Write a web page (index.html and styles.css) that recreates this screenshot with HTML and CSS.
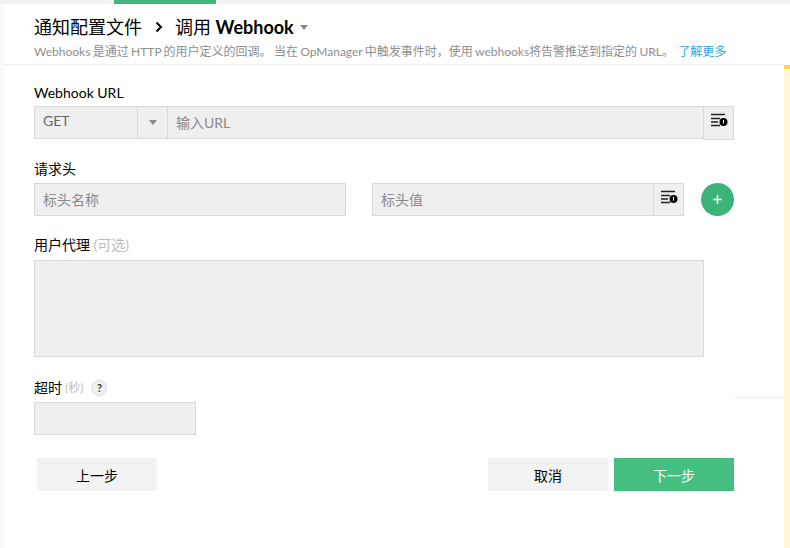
FILE: index.html
```html
<!DOCTYPE html>
<html lang="zh-CN">
<head>
<meta charset="utf-8">
<title>调用 Webhook</title>
<link rel="stylesheet" href="styles.css">
</head>
<body>
<div class="tabbar"><span class="tab-active"></span></div>
<div class="panel">
  <main class="main">
    <header class="head">
      <h1 class="title">
        <span>通知配置文件</span>
        <svg class="chev" width="10" height="12" viewBox="0 0 10 12"><path d="M2.500 1.500 7 6l-4.500 4.500" fill="none" stroke="#000" stroke-width="2"/></svg>
        <span>调用 <b class="title-b">Webhook</b></span>
        <span class="caret caret-title"></span>
      </h1>
      <p class="desc">Webhooks 是通过 HTTP 的用户定义的回调。 当在 OpManager 中触发事件时，使用 webhooks将告警推送到指定的 URL。 <a class="more" href="#">了解更多</a></p>
    </header>
    <div class="form">
      <label class="label l-url">Webhook URL</label>
      <div class="row row-url">
        <div class="field f-method"><span class="method">GET</span></div>
        <div class="field f-arrow"><span class="caret"></span></div>
        <div class="field f-grow ph">输入URL</div>
        <div class="field f-icon f-icon-tall">
          <svg width="18" height="14" viewBox="0 0 18 14"><path d="M1 1.500h14M1 5.500h9M1 9h7M1 12.500h9" stroke="#222" stroke-width="1.300" fill="none"/><circle cx="13.500" cy="9" r="4" fill="#000"/><path d="M13.500 7v3.500" stroke="#fff" stroke-width="1"/></svg>
        </div>
      </div>
      <label class="label l-head">请求头</label>
      <div class="row row-head">
        <div class="field f-name ph">标头名称</div>
        <div class="field f-value ph">标头值</div>
        <div class="field f-icon">
          <svg width="18" height="14" viewBox="0 0 18 14"><path d="M1 1.500h14M1 5.500h9M1 9h7M1 12.500h9" stroke="#222" stroke-width="1.300" fill="none"/><circle cx="13.500" cy="9" r="4" fill="#000"/><path d="M13.500 7v3.500" stroke="#fff" stroke-width="1"/></svg>
        </div>
        <button class="add" type="button"><svg width="11" height="11" viewBox="0 0 11 11"><path d="M5.500 1v9M1 5.500h9" stroke="#fff" stroke-width="1.500"/></svg></button>
      </div>
      <label class="label l-agent">用户代理 <span class="opt">(可选)</span></label>
      <div class="field f-area"></div>
      <div class="label l-time">超时 <span class="opt opt-s">(秒)</span><span class="help">?</span></div>
      <div class="field f-time"></div>
      <div class="actions">
        <button class="btn" type="button">上一步</button>
        <div class="actions-right">
          <button class="btn" type="button">取消</button>
          <button class="btn btn-primary" type="button">下一步</button>
        </div>
      </div>
    </div>
  </main>
  <aside class="side"><span class="side-top"></span></aside>
  <span class="stray-line"></span>
</div>
</body>
</html>
```
FILE: styles.css
```css
* { box-sizing: border-box; }
html, body { margin: 0; height: 100%; }
body {
  width: 790px;
  height: 548px;
  overflow: hidden;
  background: #f8f8f8;
  font-family: Lato, "Noto Sans CJK SC", sans-serif;
  color: #000;
  font-size: 14px;
}
.tabbar { height: 4px; background: #f2f2f2; padding-left: 114px; }
.tab-active { display: block; width: 102px; height: 4px; background: #41b67f; }
.panel { position: relative; margin-left: 4px; height: 544px; background: #fff; display: flex; }
.main { width: 780px; }
.head { height: 61px; padding: 8px 0 0 30px; border-bottom: 1px solid #eeeeee; }
.title { margin: 0; height: 30px; display: flex; align-items: center; font-size: 18px; font-weight: 400; line-height: 30px; }
.title-b { font-weight: 700; }
.chev { margin: 0 11px 0 12px; }
.caret { display: inline-block; width: 0; height: 0; border-left: 4px solid transparent; border-right: 4px solid transparent; border-top: 5px solid #8a8a8a; }
.caret-title { margin-left: 6px; }
.desc { margin: 0; font-size: 12px; line-height: 20px; color: #8e8e8e; white-space: nowrap; word-spacing: -0.75px; }
.more { color: #2aa3ef; text-decoration: none; margin-left: 2px; }
.form { padding-left: 30px; width: 730px; }
.label { display: block; font-size: 14px; line-height: 18px; }
.l-url { margin-top: 19px; }
.l-head { margin-top: 20px; }
.l-agent { margin-top: 20px; }
.l-time { margin-top: 22px; display: flex; align-items: center; gap: 3px; }
.row { display: flex; }
.row-url { margin-top: 4px; }
.row-head { margin-top: 5px; align-items: center; }
.field { background: #efefef; border: 1px solid #d9d9d9; height: 33px; display: flex; align-items: center; color: #8a8a8a; font-size: 14px; }
.ph { padding: 0 0 1px 8px; }
.f-method { width: 104px; padding-left: 8px; color: #666; }
.method { margin-top: -4px; }
.f-arrow { width: 30px; justify-content: center; border-left: 0; }
.f-grow { flex: 1; border-left: 0; }
.f-icon { width: 30px; justify-content: center; align-items: flex-start; padding-top: 6px; border-left: 0; }
.f-icon-tall { height: 34px; }
.f-name { width: 312px; margin-right: 26px; }
.f-value { width: 282px; }
.add { width: 33px; height: 33px; margin-left: 17px; border: 0; padding: 0; border-radius: 50%; background: #3cb478; display: flex; align-items: center; justify-content: center; }
.opt { color: #bdbdbd; }
.opt-s { font-size: 12px; }
.help { width: 16px; height: 16px; margin-left: 5px; border-radius: 50%; background: #eef0f2; border: 1px solid #dfdfdf; font-size: 11px; font-weight: 700; line-height: 14px; text-align: center; color: #333; }
.f-area { width: 670px; height: 97px; margin-top: 6px; }
.f-time { width: 162px; margin-top: 5px; }
.actions { margin-top: 23px; padding-left: 3px; display: flex; justify-content: space-between; }
.actions-right { display: flex; gap: 6px; }
.btn { width: 120px; height: 33px; border: 0; padding: 0; background: #f2f2f2; color: #000; font: inherit; font-size: 14px; }
.btn-primary { background: #45bf80; color: #fff; }
.side { width: 6px; margin-top: 61px; background: #fff6d9; }
.side-top { display: block; height: 4px; background: #ffd83d; }
.stray-line { position: absolute; left: 730px; top: 393px; width: 50px; height: 1px; background: #f0f0f0; }
```
